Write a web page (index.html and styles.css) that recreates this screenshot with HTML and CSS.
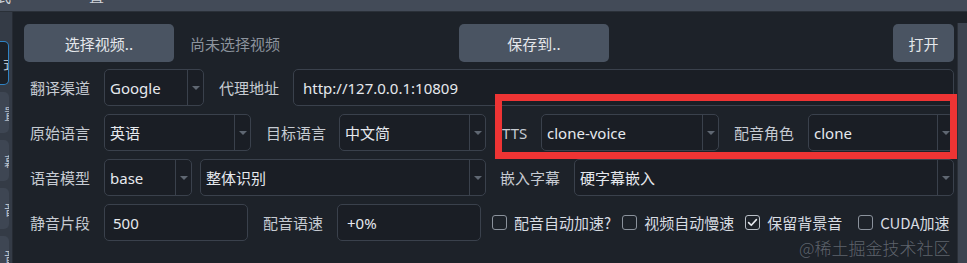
FILE: index.html
```html
<!DOCTYPE html>
<html lang="zh">
<head>
<meta charset="utf-8">
<title>视频翻译配音</title>
<link rel="stylesheet" href="styles.css">
</head>
<body>
<div class="topbar">
  <span class="tb-frag tb-a">式</span>
  <span class="tb-frag tb-b">置</span>
</div>
<div class="frame">
  <div class="sidebar">
    <div class="tab active"><span>式</span></div>
    <div class="tab"><span>置</span></div>
    <div class="tab"><span>幕</span></div>
    <div class="tab"><span>音</span></div>
    <div class="tab last"><span>音</span></div>
  </div>
  <div class="main">
    <div class="row row-top">
      <button class="btn btn-select">选择视频..</button>
      <span class="hint">尚未选择视频</span>
      <button class="btn btn-save">保存到..</button>
      <button class="btn btn-open">打开</button>
    </div>

    <div class="row">
      <span class="lbl first">翻译渠道</span>
      <div class="combo w100"><span class="val">Google</span><span class="arrow"></span></div>
      <span class="lbl gap15">代理地址</span>
      <div class="input w661 gap14"><span class="val pad10">http://127.0.0.1:10809</span></div>
    </div>

    <div class="row">
      <span class="lbl first">原始语言</span>
      <div class="combo w147"><span class="val">英语</span><span class="arrow"></span></div>
      <span class="lbl gap15">目标语言</span>
      <div class="combo w147 gap13"><span class="val">中文简</span><span class="arrow"></span></div>
      <span class="lbl gap16 tts">TTS</span>
      <div class="combo w178 gap14"><span class="val">clone-voice</span><span class="arrow"></span></div>
      <span class="lbl gap15">配音角色</span>
      <div class="combo w146 gap14"><span class="val">clone</span><span class="arrow"></span></div>
    </div>

    <div class="row">
      <span class="lbl first">语音模型</span>
      <div class="combo w88"><span class="val">base</span><span class="arrow"></span></div>
      <div class="combo w286 gap8"><span class="val">整体识别</span><span class="arrow"></span></div>
      <span class="lbl gap14">嵌入字幕</span>
      <div class="combo w380 gap14"><span class="val">硬字幕嵌入</span><span class="arrow"></span></div>
    </div>

    <div class="row">
      <span class="lbl first">静音片段</span>
      <div class="input w144"><span class="val pad9">500</span></div>
      <span class="lbl gap15">配音语速</span>
      <div class="input w144 gap14"><span class="val pad10">+0%</span></div>
      <label class="check gap11"><span class="box"></span><span class="ctext">配音自动加速?</span></label>
      <label class="check gap11"><span class="box"></span><span class="ctext">视频自动慢速</span></label>
      <label class="check gap11"><span class="box checked"><svg viewBox="0 0 15 15" width="15" height="15"><path d="M3.6 7.6 L6.3 10.3 L11.4 4.6" fill="none" stroke="#e6e9ee" stroke-width="1.6" stroke-linecap="round" stroke-linejoin="round"/></svg></span><span class="ctext">保留背景音</span></label>
      <label class="check gap16"><span class="box"></span><span class="ctext">CUDA加速</span></label>
    </div>
  </div>
  <div class="scroll"></div>
</div>
<div class="redbox"></div>
<div class="watermark">@稀土掘金技术社区</div>
</body>
</html>
```

FILE: styles.css
```css
* { box-sizing: border-box; }
html, body {
  margin: 0;
  padding: 0;
  width: 967px;
  height: 263px;
  overflow: hidden;
  background: #1d2229;
  font-family: "Noto Sans", "Noto Sans CJK SC", sans-serif;
  font-size: 15px;
  color: #c8cdd4;
}
body { position: relative; }

.topbar {
  height: 12px;
  background: #434b58;
  border-bottom: 1px solid #2a3038;
  overflow: hidden;
  display: flex;
  align-items: flex-start;
}
.tb-frag {
  font-family: "Noto Sans CJK SC", sans-serif;
  font-size: 15px;
  line-height: 15px;
  margin-top: -12px;
  color: #d0d4da;
}
.tb-a { margin-left: -4px; }
.tb-b { margin-left: 78px; }

.frame {
  display: flex;
  height: 251px;
}
.sidebar {
  width: 13px;
  background: #343b46;
  border-right: 1px solid #262b33;
  display: flex;
  flex-direction: column;
  gap: 7px;
  padding-top: 29px;
  overflow: hidden;
}
.tab {
  width: 9px;
  height: 41px;
  background: #3e4653;
  border-radius: 0 5px 5px 0;
  display: flex;
  align-items: center;
  justify-content: flex-end;
  overflow: hidden;
  flex-shrink: 0;
}
.tab span {
  font-family: "Noto Sans CJK SC", sans-serif;
  font-size: 14px;
  color: #b8bec6;
  margin-right: -9px;
  white-space: nowrap;
}
.tab.active {
  height: 44px;
  background: #1b2027;
  border: 1px solid #2f83c4;
  border-left: none;
}
.tab.last { height: 40px; }

.main {
  width: 944px;
  padding: 12px 0 0 11px;
  display: flex;
  flex-direction: column;
  gap: 8px;
}
.scroll {
  width: 10px;
  margin-top: 11px;
  background: #3d4450;
  border-left: 1px solid #2a2f37;
}

.row {
  display: flex;
  align-items: center;
  height: 37px;
  white-space: nowrap;
}
.row-top {
  height: 38px;
  margin-bottom: -1px;
}

.btn {
  height: 38px;
  border: none;
  border-radius: 5px;
  background: #4a5462;
  color: #e4e7eb;
  font-family: "Noto Sans CJK SC", sans-serif;
  font-size: 15px;
  padding: 0;
}
.btn-select { width: 150px; }
.hint {
  margin-left: 16px;
  width: 90px;
  color: #8c939d;
  font-family: "Noto Sans CJK SC", sans-serif;
}
.btn-save { width: 150px; margin-left: 179px; }
.btn-open { width: 61px; margin-left: 284px; }

.lbl {
  font-family: "Noto Sans CJK SC", sans-serif;
  color: #c6cbd2;
  width: 60px;
  flex-shrink: 0;
}
.lbl.first { width: 80px; padding-left: 6px; }
.lbl.tts { width: 25px; font-family: "Noto Sans", sans-serif; }

.gap8 { margin-left: 8px; }
.gap11 { margin-left: 11px; }
.gap13 { margin-left: 13px; }
.gap14 { margin-left: 14px; }
.gap15 { margin-left: 15px; }
.gap16 { margin-left: 16px; }

.combo, .input {
  height: 37px;
  border: 1px solid #3a414c;
  border-radius: 5px;
  background: #1a1e25;
  display: flex;
  align-items: center;
  flex-shrink: 0;
}
.val {
  flex: 1;
  padding-left: 5px;
  color: #e6e9ee;
  font-family: "Noto Sans", "Noto Sans CJK SC", sans-serif;
  overflow: hidden;
}
.pad9 { padding-left: 8px; }
.pad10 { padding-left: 9px; }
.arrow {
  width: 16px;
  height: 100%;
  border-left: 1px solid #3a414c;
  display: flex;
  align-items: center;
  justify-content: center;
}
.arrow::after {
  content: "";
  border-left: 4px solid transparent;
  border-right: 4px solid transparent;
  border-top: 4px solid #5f6772;
}

.w88 { width: 88px; }
.w100 { width: 100px; }
.w144 { width: 144px; }
.w146 { width: 146px; }
.w147 { width: 147px; }
.w178 { width: 178px; }
.w286 { width: 286px; }
.w380 { width: 380px; }
.w661 { width: 661px; }

.check {
  display: flex;
  align-items: center;
  gap: 7px;
  font-family: "Noto Sans CJK SC", sans-serif;
  color: #d8dce2;
}
.box {
  width: 15px;
  height: 15px;
  border: 1.5px solid #8b929c;
  border-radius: 3px;
  display: flex;
  align-items: center;
  justify-content: center;
}
.box.checked { border-color: #b9bfc7; }
.box svg { display: block; margin: -1.5px; }
.ctext { font-family: "Noto Sans CJK SC", "Noto Sans", sans-serif; }

.redbox {
  position: absolute;
  left: 495px;
  top: 94px;
  width: 462px;
  height: 65px;
  border: 7px solid #ee3434;
}
.watermark {
  position: absolute;
  left: 799px;
  top: 235px;
  font-family: "Noto Sans CJK SC", sans-serif;
  font-weight: 300;
  font-size: 17px;
  color: rgba(150, 156, 166, 0.55);
  white-space: nowrap;
}
```
